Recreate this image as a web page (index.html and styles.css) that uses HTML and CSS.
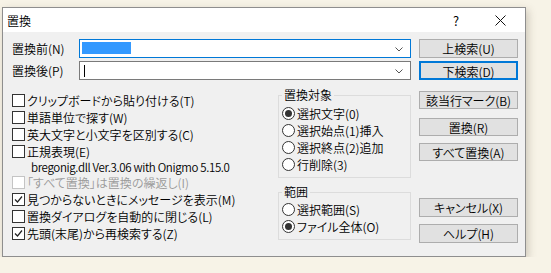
FILE: index.html
```html
<!DOCTYPE html>
<html lang="ja">
<head>
    <meta charset="UTF-8">
    <title>置換</title>
    <link rel="stylesheet" href="styles.css">
</head>
<body>
    <div class="dialog">
        <div class="titlebar">
            <span class="title">置換</span>
            <span class="help">?</span>
            <span class="close">
                <svg width="11" height="11" viewBox="0 0 11 11"><path d="M0.5 0.5 L10.5 10.5 M10.5 0.5 L0.5 10.5" stroke="#111" stroke-width="1" fill="none"/></svg>
            </span>
        </div>

        <div class="client">
            <div class="main">
                <div class="field">
                    <span class="field-label">置換前(N)</span>
                    <div class="combo focused">
                        <span class="selection"></span>
                        <svg class="chevron" width="8" height="5" viewBox="0 0 8 5"><path d="M0.5 0.5 L4 4 L7.5 0.5" stroke="#555" fill="none"/></svg>
                    </div>
                </div>
                <div class="field">
                    <span class="field-label">置換後(P)</span>
                    <div class="combo">
                        <span class="caret"></span>
                        <svg class="chevron" width="8" height="5" viewBox="0 0 8 5"><path d="M0.5 0.5 L4 4 L7.5 0.5" stroke="#555" fill="none"/></svg>
                    </div>
                </div>

                <div class="lower">
                    <div class="options">
                        <label class="check"><span class="box"></span>クリップボードから貼り付ける(T)</label>
                        <label class="check"><span class="box"></span>単語単位で探す(W)</label>
                        <label class="check"><span class="box"></span>英大文字と小文字を区別する(C)</label>
                        <label class="check"><span class="box"></span>正規表現(E)</label>
                        <div class="dll-info">bregonig.dll Ver.3.06 with Onigmo 5.15.0</div>
                        <label class="check disabled"><span class="box"></span>「すべて置換」は置換の繰返し(I)</label>
                        <label class="check"><span class="box checked"><svg width="11" height="11" viewBox="0 0 11 11"><path d="M2 5.5 L4.5 8 L9 2.5" stroke="#222" stroke-width="1.2" fill="none"/></svg></span>見つからないときにメッセージを表示(M)</label>
                        <label class="check"><span class="box"></span>置換ダイアログを自動的に閉じる(L)</label>
                        <label class="check"><span class="box checked"><svg width="11" height="11" viewBox="0 0 11 11"><path d="M2 5.5 L4.5 8 L9 2.5" stroke="#222" stroke-width="1.2" fill="none"/></svg></span>先頭(末尾)から再検索する(Z)</label>
                    </div>

                    <div class="groups">
                        <fieldset class="group target">
                            <legend>置換対象</legend>
                            <label class="radio"><span class="dot on"></span>選択文字(0)</label>
                            <label class="radio"><span class="dot"></span>選択始点(1)挿入</label>
                            <label class="radio"><span class="dot"></span>選択終点(2)追加</label>
                            <label class="radio"><span class="dot"></span>行削除(3)</label>
                        </fieldset>
                        <fieldset class="group range">
                            <legend>範囲</legend>
                            <label class="radio"><span class="dot"></span>選択範囲(S)</label>
                            <label class="radio"><span class="dot on"></span>ファイル全体(O)</label>
                        </fieldset>
                    </div>
                </div>
            </div>

            <div class="side">
                <button class="btn">上検索(U)</button>
                <button class="btn default">下検索(D)</button>
                <button class="btn mark">該当行マーク(B)</button>
                <button class="btn replace">置換(R)</button>
                <button class="btn replace-all">すべて置換(A)</button>
                <button class="btn cancel">キャンセル(X)</button>
                <button class="btn help-btn">ヘルプ(H)</button>
            </div>
        </div>
    </div>
</body>
</html>
```

FILE: styles.css
```css
body {
    margin: 0;
    padding: 7px 0 0 2px;
    background-color: #f7f3e7;
    font-family: "Noto Sans CJK JP DemiLight", "Noto Sans CJK JP", sans-serif;
    font-weight: 350;
    font-size: 12px;
    font-feature-settings: "palt";
    color: #000;
}

.dialog {
    width: 522px;
    height: 248px;
    border: 1px solid #8e8e8e;
    background-color: #f0f0f0;
    box-shadow: 2px 3px 8px rgba(90, 80, 60, 0.28);
}

/* Title bar */
.titlebar {
    display: flex;
    align-items: center;
    height: 24px;
    background-color: #fff;
}

.title {
    flex: 1;
    padding-left: 4px;
}

.help {
    width: 10px;
    margin-right: 34px;
    font-size: 13px;
    text-align: center;
}

.close {
    display: flex;
    margin-right: 19px;
}

/* Client area */
.client {
    display: flex;
    padding: 7px 0 0 9px;
}

.main {
    width: 399px;
}

.field {
    display: flex;
    align-items: center;
    height: 19px;
}

.field + .field {
    margin-top: 3px;
}

.field-label {
    width: 67px;
}

.combo {
    position: relative;
    box-sizing: border-box;
    width: 332px;
    height: 19px;
    background-color: #fff;
    border: 1px solid #7a7a7a;
}

.combo.focused {
    border-color: #0078d7;
}

.selection {
    position: absolute;
    left: 2px;
    top: 2px;
    width: 49px;
    height: 12px;
    background-color: #3399ff;
}

.caret {
    position: absolute;
    left: 4px;
    top: 3px;
    width: 1px;
    height: 12px;
    background-color: #000;
}

.chevron {
    position: absolute;
    right: 7px;
    top: 7px;
}

/* Options and groups */
.lower {
    display: flex;
    margin-top: 6px;
}

.options {
    width: 266px;
    padding-top: 6px;
}

.check {
    display: flex;
    align-items: center;
    height: 17px;
    line-height: 14px;
    white-space: nowrap;
}

.box {
    display: flex;
    align-items: center;
    justify-content: center;
    box-sizing: border-box;
    width: 13px;
    height: 13px;
    margin-right: 2px;
    background-color: #fff;
    border: 1px solid #333;
}

.check.disabled {
    color: #9a9a9a;
}

.check.disabled .box {
    border-color: #c4c4c4;
}

.dll-info {
    height: 12px;
    line-height: 12px;
    padding-left: 19px;
    margin: 1px 0;
    font-size: 11.5px;
    letter-spacing: -0.35px;
    white-space: nowrap;
}

.groups {
    width: 133px;
}

.group {
    margin: 2px 0 0;
    padding: 3px 2px 4px 3px;
    border: 1px solid #dcdcdc;
}

.group legend {
    padding: 0 2px;
    line-height: 14px;
}

.group.range {
    margin-top: 7px;
    padding-top: 2px;
}

.radio {
    display: flex;
    align-items: center;
    height: 17px;
    line-height: 14px;
    white-space: nowrap;
}

.dot {
    display: flex;
    align-items: center;
    justify-content: center;
    box-sizing: border-box;
    width: 13px;
    height: 13px;
    margin-right: 2px;
    background-color: #fff;
    border: 1px solid #333;
    border-radius: 50%;
}

.dot.on::after {
    content: "";
    width: 7px;
    height: 7px;
    border-radius: 50%;
    background-color: #333;
}

/* Buttons */
.side {
    display: flex;
    flex-direction: column;
    width: 99px;
    margin-left: 8px;
}

.btn {
    box-sizing: border-box;
    height: 19px;
    padding: 0;
    font: inherit;
    color: #000;
    background-color: #e1e1e1;
    border: 1px solid #adadad;
}

.btn.default {
    margin-top: 3px;
    border: 2px solid #0078d7;
}

.btn.mark {
    margin-top: 11px;
    height: 18px;
}

.btn.replace {
    margin-top: 9px;
    height: 18px;
}

.btn.replace-all {
    margin-top: 7px;
    height: 18px;
}

.btn.cancel {
    margin-top: 37px;
}

.btn.help-btn {
    margin-top: 7px;
}
```
